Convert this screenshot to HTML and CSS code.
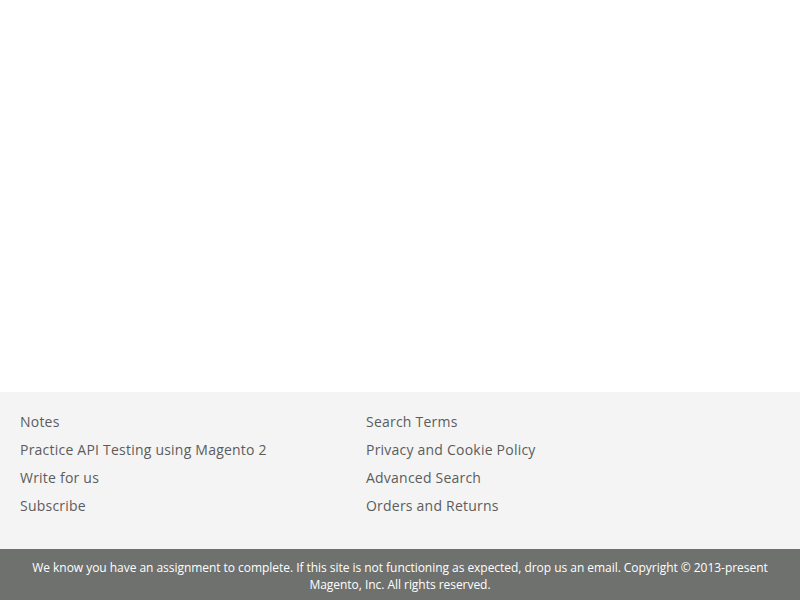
FILE: index.html
```html
<!DOCTYPE html>
<html lang="en">
<head>
<meta charset="utf-8">
<title>Footer</title>
<link rel="stylesheet" href="styles.css">
</head>
<body>
<main class="page-main"></main>
<footer class="page-footer">
  <div class="footer-content">
    <ul class="footer-links col-first">
      <li><a href="#">Notes</a></li>
      <li><a href="#">Practice API Testing using Magento 2</a></li>
      <li><a href="#">Write for us</a></li>
      <li><a href="#">Subscribe</a></li>
    </ul>
    <ul class="footer-links">
      <li><a href="#">Search Terms</a></li>
      <li><a href="#">Privacy and Cookie Policy</a></li>
      <li><a href="#">Advanced Search</a></li>
      <li><a href="#">Orders and Returns</a></li>
    </ul>
  </div>
</footer>
<div class="copyright">We know you have an assignment to complete. If this site is not functioning as expected, drop us an email. Copyright © 2013-present Magento, Inc. All rights reserved.</div>
</body>
</html>
```

FILE: styles.css
```css
html, body {
  margin: 0;
  padding: 0;
  background: #ffffff;
  font-family: "Open Sans", "Liberation Sans", sans-serif;
}
.page-main {
  height: 392px;
}
.page-footer {
  background: #f4f4f4;
}
.footer-content {
  display: flex;
  padding: 20px 20px 25px;
}
.footer-links {
  list-style: none;
  margin: 0;
  padding: 0;
  font-size: 14px;
  line-height: 20px;
  letter-spacing: 0.22px;
}
.col-first {
  width: 346px;
}
.footer-links li {
  margin: 0 0 8px;
}
.footer-links a {
  color: #5c5c5c;
  text-decoration: none;
}
.copyright {
  background: #6e716e;
  color: #ffffff;
  font-size: 12px;
  line-height: 17px;
  letter-spacing: -0.04px;
  text-align: center;
  padding: 10px 20px;
}
```
